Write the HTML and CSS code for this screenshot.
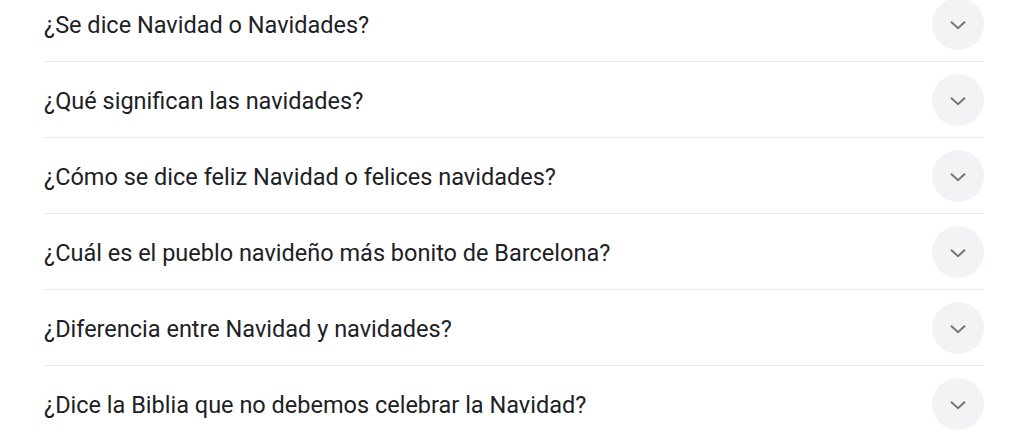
FILE: index.html
```html
<!DOCTYPE html>
<html lang="es">
<head>
<meta charset="utf-8">
<title>Preguntas</title>
<link rel="stylesheet" href="styles.css">
</head>
<body>
<div class="list">
  <div class="row"><span class="q">¿Se dice Navidad o Navidades?</span><span class="btn"><svg viewBox="0 0 18 10" width="18" height="10"><polyline points="2,1.8 9,8.2 16,1.8" /></svg></span></div>
  <div class="row"><span class="q">¿Qué significan las navidades?</span><span class="btn"><svg viewBox="0 0 18 10" width="18" height="10"><polyline points="2,1.8 9,8.2 16,1.8" /></svg></span></div>
  <div class="row"><span class="q">¿Cómo se dice feliz Navidad o felices navidades?</span><span class="btn"><svg viewBox="0 0 18 10" width="18" height="10"><polyline points="2,1.8 9,8.2 16,1.8" /></svg></span></div>
  <div class="row"><span class="q">¿Cuál es el pueblo navideño más bonito de Barcelona?</span><span class="btn"><svg viewBox="0 0 18 10" width="18" height="10"><polyline points="2,1.8 9,8.2 16,1.8" /></svg></span></div>
  <div class="row"><span class="q">¿Diferencia entre Navidad y navidades?</span><span class="btn"><svg viewBox="0 0 18 10" width="18" height="10"><polyline points="2,1.8 9,8.2 16,1.8" /></svg></span></div>
  <div class="row"><span class="q">¿Dice la Biblia que no debemos celebrar la Navidad?</span><span class="btn"><svg viewBox="0 0 18 10" width="18" height="10"><polyline points="2,1.8 9,8.2 16,1.8" /></svg></span></div>
</div>
</body>
</html>
```
FILE: styles.css
```css
html, body {
  margin: 0;
  padding: 0;
  background: #ffffff;
  overflow: hidden;
}
body {
  font-family: Roboto, "Liberation Sans", Arial, sans-serif;
  color: #202124;
}
.list {
  margin: -14px 0 0 44px;
  width: 940px;
}
.row {
  display: flex;
  align-items: center;
  justify-content: space-between;
  padding: 12px 0 11px 0;
  border-bottom: 1px solid #e8eaed;
}
.row:last-child {
  border-bottom: none;
}
.q {
  font-size: 23.5px;
  line-height: 30px;
  letter-spacing: 0;
  margin-top: 2px;
}
.btn {
  width: 52px;
  height: 52px;
  border-radius: 50%;
  background: #f1f3f4;
  display: flex;
  align-items: center;
  justify-content: center;
  flex-shrink: 0;
}
.btn svg {
  display: block;
  margin-top: 2px;
}
.btn polyline {
  fill: none;
  stroke: #70757a;
  stroke-width: 2;
  stroke-linecap: butt;
  stroke-linejoin: miter;
}
```
